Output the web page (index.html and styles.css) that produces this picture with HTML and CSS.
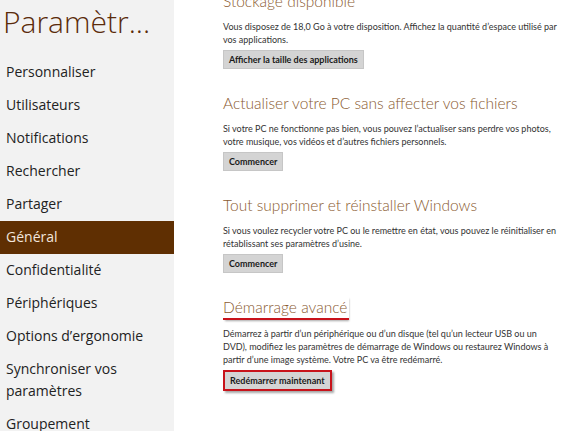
FILE: index.html
```html
<!DOCTYPE html>
<html lang="fr">
<head>
  <meta charset="UTF-8">
  <title>Paramètres du PC</title>
  <link rel="stylesheet" href="styles.css">
</head>
<body>
  <div class="screen">
    <!-- Menu de gauche -->
    <nav class="sidebar">
      <h1 class="title">Paramètr...</h1>
      <ul class="menu">
        <li>Personnaliser</li>
        <li>Utilisateurs</li>
        <li>Notifications</li>
        <li>Rechercher</li>
        <li>Partager</li>
        <li class="selected">Général</li>
        <li>Confidentialité</li>
        <li>Périphériques</li>
        <li>Options d’ergonomie</li>
        <li>Synchroniser vos paramètres</li>
        <li>Groupement résidentiel</li>
      </ul>
    </nav>

    <!-- Contenu -->
    <main class="content">
      <section class="block">
        <h2>Stockage disponible</h2>
        <p>Vous disposez de 18,0 Go à votre disposition. Affichez la quantité d’espace utilisé par vos applications.</p>
        <button class="btn">Afficher la taille des applications</button>
      </section>

      <section class="block">
        <h2>Actualiser votre PC sans affecter vos fichiers</h2>
        <p>Si votre PC ne fonctionne pas bien, vous pouvez l’actualiser sans perdre vos photos, votre musique, vos vidéos et d’autres fichiers personnels.</p>
        <button class="btn">Commencer</button>
      </section>

      <section class="block">
        <h2>Tout supprimer et réinstaller Windows</h2>
        <p>Si vous voulez recycler votre PC ou le remettre en état, vous pouvez le réinitialiser en rétablissant ses paramètres d’usine.</p>
        <button class="btn">Commencer</button>
      </section>

      <section class="block">
        <h2><span class="marked">Démarrage avancé</span></h2>
        <p>Démarrez à partir d’un périphérique ou d’un disque (tel qu’un lecteur USB ou un DVD), modifiez les paramètres de démarrage de Windows ou restaurez Windows à partir d’une image système. Votre PC va être redémarré.</p>
        <button class="btn btn-marked">Redémarrer maintenant</button>
      </section>
    </main>
  </div>
</body>
</html>
```

FILE: styles.css
```css
/* Reset */
* {
  margin: 0;
  padding: 0;
  box-sizing: border-box;
}
html, body {
  height: 100%;
}
body {
  font-family: "Open Sans", "Noto Sans", sans-serif;
  background: #ffffff;
  color: #333333;
}
.screen {
  display: flex;
  height: 100vh;
  overflow: hidden;
}
/* Menu de gauche */
.sidebar {
  width: 174px;
  flex-shrink: 0;
  background: #f2f2f2;
}
.title {
  height: 56px;
  padding-left: 3px;
  font-size: 30px;
  font-weight: 300;
  line-height: 44px;
  color: #5b2b0a;
  white-space: nowrap;
}
.menu {
  list-style: none;
}
.menu li {
  padding: 5px 24px 6px 6px;
  font-size: 14px;
  line-height: 22px;
  color: #222222;
}
.menu li.selected {
  background: #5f2f02;
  color: #f2e6dc;
}
/* Contenu */
.content {
  flex: 1;
  padding-left: 49px;
  padding-right: 15px;
  margin-top: -11px;
  font-family: Lato, "Open Sans", sans-serif;
}
.block {
  margin-bottom: 22px;
}
.block h2 {
  font-size: 15.5px;
  font-weight: 300;
  line-height: 24px;
  color: #8a5a30;
  white-space: nowrap;
}
.block p {
  margin-top: 7px;
  margin-bottom: 4px;
  font-size: 9px;
  line-height: 13px;
  color: #333333;
}
.btn {
  display: block;
  padding: 2px 5px;
  font-family: inherit;
  font-size: 9px;
  font-weight: 700;
  line-height: 13px;
  color: #1a1a1a;
  background: #d4d4d4;
  border: 1px solid #c6c6c6;
}
/* Annotations rouges */
.marked {
  display: inline-block;
  padding: 0 2px 0 0;
  border-bottom: 2px solid #c8131b;
  box-shadow: 1px 2px 2px -1px rgba(0, 0, 0, 0.35);
  line-height: 22px;
}
.btn-marked {
  border: 2px solid #c8131b;
  box-shadow: 2px 2px 2px rgba(0, 0, 0, 0.35);
}
```
